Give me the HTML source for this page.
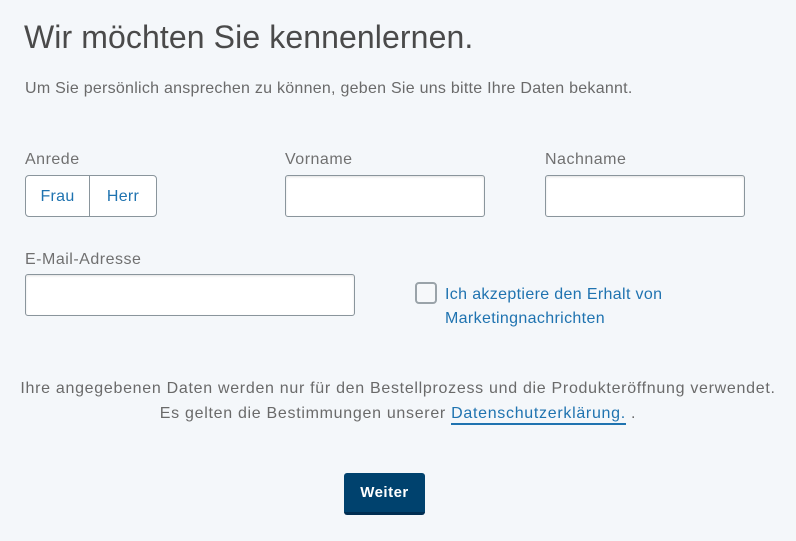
<!DOCTYPE html>
<html><head><meta charset="utf-8"><style>
*{box-sizing:border-box;margin:0;padding:0}
body{width:796px;height:541px;background:#f4f7fa;font-family:"Liberation Sans",sans-serif;color:#6a6a6a;position:relative;overflow:hidden}
.a{position:absolute;white-space:nowrap}
h1{position:absolute;left:24px;top:19px;font-weight:normal;font-size:32px;color:#4a4a4a;letter-spacing:0.1px}
.lbl{font-size:16px;color:#707070;letter-spacing:0.5px}
.inp{position:absolute;background:#fff;border:1px solid #8a959c;border-radius:3px;box-shadow:inset 0 1px 2px rgba(0,0,0,.12)}
.blue{color:#1f73b0}
</style></head><body>
<h1>Wir möchten Sie kennenlernen.</h1>
<div class="a" style="left:25px;top:80px;font-size:16px;letter-spacing:0.26px">Um Sie persönlich ansprechen zu können, geben Sie uns bitte Ihre Daten bekannt.</div>
<div class="a lbl" style="left:25px;top:151px">Anrede</div>
<div class="a lbl" style="left:285px;top:151px">Vorname</div>
<div class="a lbl" style="left:545px;top:151px">Nachname</div>
<div class="a" style="left:25px;top:175px;width:132px;height:42px;background:#fff;border:1px solid #8a959c;border-radius:4px;display:flex;font-size:16px">
<div class="blue" style="width:64px;border-right:1px solid #8a959c;text-align:center;line-height:41px;letter-spacing:0.3px">Frau</div>
<div class="blue" style="flex:1;text-align:center;line-height:41px;letter-spacing:0.3px">Herr</div></div>
<div class="inp" style="left:285px;top:175px;width:200px;height:42px"></div>
<div class="inp" style="left:545px;top:175px;width:200px;height:42px"></div>
<div class="a lbl" style="left:25px;top:251px">E-Mail-Adresse</div>
<div class="inp" style="left:25px;top:274px;width:330px;height:42px"></div>
<div class="a" style="left:415px;top:282px;width:22px;height:22px;border:2px solid #9aa3a9;border-radius:4px;background:#f6f8fa"></div>
<div class="a blue" style="left:445px;top:283px;font-size:16px;line-height:24px;letter-spacing:0.35px">Ich akzeptiere den Erhalt von<br>Marketingnachrichten</div>
<div class="a" style="left:0;width:796px;top:376px;text-align:center;font-size:16px;line-height:25px;letter-spacing:0.7px">Ihre angegebenen Daten werden nur für den Bestellprozess und die Produkteröffnung verwendet.<br>Es gelten die Bestimmungen unserer <span class="blue" style="border-bottom:2px solid #1f73b0;padding-bottom:1px">Datenschutzerklärung.</span> .</div>
<div class="a" style="left:344px;top:473px;width:81px;height:42px;background:#00426e;border-radius:3px;border-bottom:3px solid #002e52;color:#fff;font-weight:bold;font-size:15px;text-align:center;line-height:40px;letter-spacing:0.5px">Weiter</div>
</body></html>
